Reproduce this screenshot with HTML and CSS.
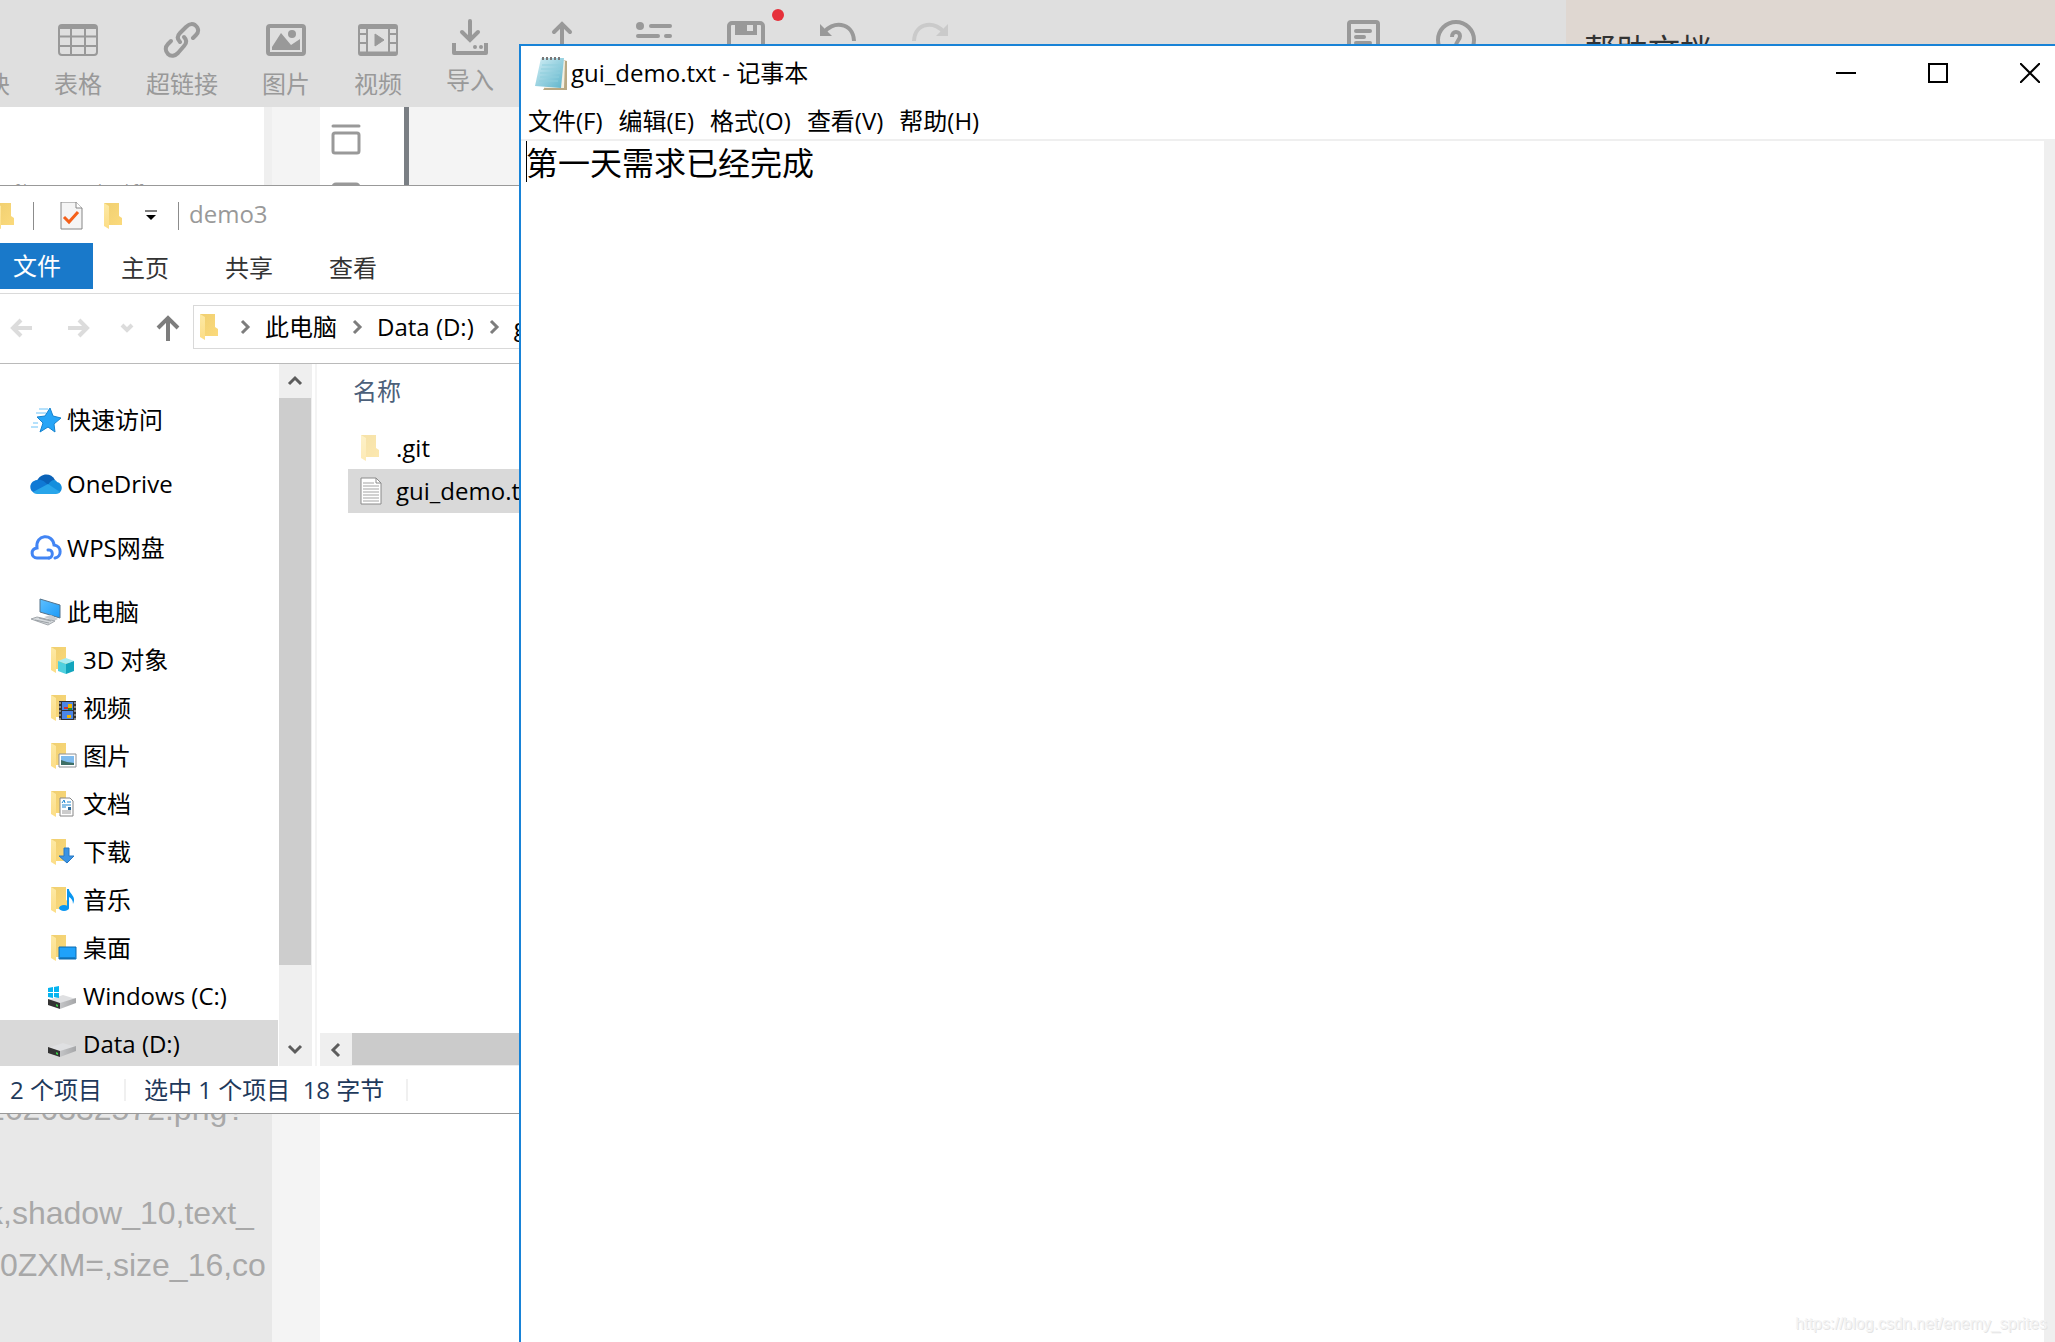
FILE: index.html
```html
<!DOCTYPE html>
<html lang="zh-CN">
<head>
    <meta charset="UTF-8">
    <meta name="viewport" content="width=device-width, initial-scale=1.0">
    <title>gui_demo.txt - 记事本</title>
    <link rel="stylesheet" href="styles.css">
</head>
<body>

<!-- shared icons -->
<svg class="sprite" aria-hidden="true">
    <defs>
        <linearGradient id="fold" x1="0" y1="0" x2="1" y2="1">
            <stop offset="0" stop-color="#f0cf70"/>
            <stop offset="1" stop-color="#fbda7c"/>
        </linearGradient>
        <linearGradient id="flap" x1="0" y1="0" x2="0" y2="1">
            <stop offset="0" stop-color="#fde9a4"/>
            <stop offset="1" stop-color="#fcdd86"/>
        </linearGradient>
        <linearGradient id="sky" x1="0" y1="0" x2="1" y2="1">
            <stop offset="0" stop-color="#5ec0ff"/>
            <stop offset="1" stop-color="#1b9af7"/>
        </linearGradient>
        <linearGradient id="metal" x1="0" y1="0" x2="1" y2="0">
            <stop offset="0" stop-color="#c4c5c7"/>
            <stop offset="1" stop-color="#a5a6a8"/>
        </linearGradient>
        <linearGradient id="pad" x1="0" y1="0" x2="1" y2="1">
            <stop offset="0" stop-color="#d3eff5"/>
            <stop offset="1" stop-color="#5db4cb"/>
        </linearGradient>
    </defs>
    <symbol id="folder" viewBox="0 0 28 28">
        <path d="M1 1h15v13l3 2v7H4z" fill="url(#fold)"/>
        <path d="M1 1l5 3v23l-5-3z" fill="url(#flap)"/>
    </symbol>
    <symbol id="chevron" viewBox="0 0 12 16">
        <path d="M3 2l6 6-6 6" fill="none" stroke="currentColor" stroke-width="3"/>
    </symbol>
    <symbol id="drive" viewBox="0 0 28 28">
        <path d="M0 18l15-5 13 4-16 5z" fill="#dfe0e2"/>
        <path d="M12 21l16-5v5l-16 6z" fill="url(#metal)"/>
        <path d="M0 17l12 4v6L0 23z" fill="#333"/>
        <path d="M8 22l2 1v2l-2-1z" fill="#3ad047"/>
    </symbol>
</svg>

<main class="desktop">

    <!-- editor behind the windows -->
    <section class="editor">
        <header class="toolbar">
            <button class="tool">
                <span class="tool-icon"></span>
                <span>块</span>
            </button>
            <button class="tool">
                <svg class="tool-icon" viewBox="0 0 40 40" fill="none" stroke="currentColor" stroke-width="2">
                    <rect x="1" y="5" width="38" height="30" rx="3"/>
                    <path d="M1 7h38" stroke-width="4"/>
                    <path d="M1 16.500h38M1 26h38M13 8v27M27 8v27"/>
                </svg>
                <span>表格</span>
            </button>
            <button class="tool">
                <svg class="tool-icon" viewBox="0 0 40 40" fill="none" stroke="currentColor" stroke-width="4" stroke-linecap="round">
                    <path d="M18 22c-3-3-3-6 0-9l6-6c3-3 6-4 9-2 4 3 4 7 1 10l-3 3"/>
                    <path d="M22 17c3 3 3 6 0 9l-6 7c-3 3-7 4-10 1s-3-7 0-10l3-3"/>
                </svg>
                <span>超链接</span>
            </button>
            <button class="tool">
                <svg class="tool-icon" viewBox="0 0 40 40">
                    <rect x="2" y="6" width="36" height="28" rx="2" fill="none" stroke="currentColor" stroke-width="4"/>
                    <path d="M6 30v-3l9-14 10 12 9-6v11z" fill="currentColor"/>
                    <circle cx="26" cy="14" r="4" fill="currentColor"/>
                </svg>
                <span>图片</span>
            </button>
            <button class="tool">
                <svg class="tool-icon" viewBox="0 0 40 40">
                    <rect x="1" y="5" width="38" height="30" rx="2" fill="none" stroke="currentColor" stroke-width="2"/>
                    <path d="M2 7h36M2 33.500h36" stroke="currentColor" stroke-width="4"/>
                    <path d="M9 6v28M31 6v28M2 14h7M2 23h7M31 14h7M31 23h7" stroke="currentColor" stroke-width="2"/>
                    <path d="M17 14l9 6-9 6z" fill="currentColor" stroke="currentColor"/>
                </svg>
                <span>视频</span>
            </button>
            <button class="tool raised">
                <svg class="tool-icon" viewBox="0 0 40 40" fill="none" stroke="currentColor" stroke-width="4" stroke-linecap="round">
                    <path d="M20 5v18M12 16l8 8 8-8"/>
                    <path d="M4 29v8h32v-8" stroke-linecap="square" stroke-linejoin="round"/>
                    <path d="M25 31h0M31 31h0"/>
                </svg>
                <span>导入</span>
            </button>
            <button class="tool raised" aria-label="导出">
                <svg class="tool-icon" viewBox="0 0 40 40" fill="none" stroke="currentColor" stroke-width="4" stroke-linecap="round">
                    <path d="M20 36V8M12 16l8-8 8 8"/>
                </svg>
            </button>
            <button class="tool raised" aria-label="大纲">
                <svg class="tool-icon" viewBox="0 0 40 40" fill="none" stroke="currentColor" stroke-width="4" stroke-linecap="round">
                    <circle cx="6" cy="10" r="4" fill="currentColor" stroke="none"/>
                    <path d="M17 10h19M4 20h20M32 20h4"/>
                </svg>
            </button>
            <button class="tool raised" aria-label="保存">
                <svg class="tool-icon" viewBox="0 0 40 40">
                    <rect x="3" y="7" width="34" height="34" rx="3" fill="none" stroke="currentColor" stroke-width="4"/>
                    <path d="M9 7h22v12H9z" fill="currentColor"/>
                    <path d="M21 9h6v6h-6z" fill="#dfdfdf"/>
                </svg>
                <span class="unsaved-dot"></span>
            </button>
            <button class="tool raised" aria-label="撤销">
                <svg class="tool-icon" viewBox="0 0 40 40">
                    <path d="M6 17c7-12 29-12 30 8" fill="none" stroke="currentColor" stroke-width="4"/>
                    <path d="M2 8v12h12z" fill="currentColor"/>
                </svg>
            </button>
            <button class="tool raised" aria-label="重做" disabled>
                <svg class="tool-icon" viewBox="0 0 40 40">
                    <path d="M34 17C27 5 5 5 4 25" fill="none" stroke="currentColor" stroke-width="4"/>
                    <path d="M38 8v12H26z" fill="currentColor"/>
                </svg>
            </button>
            <button class="tool raised push-right" aria-label="模版">
                <svg class="tool-icon" viewBox="0 0 40 40" fill="none" stroke="currentColor" stroke-width="4">
                    <rect x="5" y="6" width="29" height="34" rx="2"/>
                    <path d="M12 15h14M12 21h8M12 27h14" stroke-linecap="round"/>
                </svg>
            </button>
            <button class="tool raised" aria-label="帮助">
                <svg class="tool-icon" viewBox="0 0 40 40" fill="none" stroke="currentColor" stroke-width="4">
                    <circle cx="20" cy="24" r="18"/>
                    <path d="M16 21c0-7 8-6 8-1 0 4-4 5-4 10"/>
                </svg>
            </button>
        </header>
        <aside class="help-panel">帮助文档</aside>
        <div class="source">
            <p class="diff-hint">a file to view the diff</p>
            <div class="markdown">
                <p>2620332572.png?</p>
                <p></p>
                <p>k,shadow_10,text_</p>
                <p class="flush">0ZXM=,size_16,co</p>
            </div>
        </div>
        <div class="gutter"></div>
        <div class="side">
            <nav class="side-tools">
                <svg viewBox="0 0 30 88" fill="none" stroke="#999" stroke-width="3" stroke-linecap="round">
                    <path d="M2 2h26"/>
                    <rect x="2" y="9" width="26" height="20" rx="2"/>
                    <rect x="2" y="60" width="26" height="20" rx="3"/>
                </svg>
            </nav>
            <div class="preview"></div>
        </div>
    </section>

    <!-- file explorer -->
    <section class="explorer">
        <header class="quick-bar">
            <svg class="icon folder-icon cut" viewBox="0 0 28 28"><use href="#folder"/></svg>
            <span class="divider"></span>
            <svg class="icon" viewBox="0 0 28 28">
                <path d="M4 0h15l6 6v21H4z" fill="#f5f5f5" stroke="#868686"/>
                <path d="M19 0v6h6" fill="#fff" stroke="#868686"/>
                <path d="M7 15l5 5 9-10" fill="none" stroke="#f4601a" stroke-width="3"/>
            </svg>
            <svg class="icon folder-icon" viewBox="0 0 28 28"><use href="#folder"/></svg>
            <svg class="more" viewBox="0 0 12 12"><path d="M0 1h12" stroke="#000" stroke-width="1"/><path d="M1 5h10l-5 5z"/></svg>
            <span class="divider"></span>
            <h1>demo3</h1>
        </header>

        <nav class="tabs">
            <button class="tab file">文件</button>
            <button class="tab">主页</button>
            <button class="tab">共享</button>
            <button class="tab">查看</button>
        </nav>

        <div class="address-row">
            <div class="history">
                <svg viewBox="0 0 172 28" fill="none" stroke="#dcdcdc" stroke-width="4">
                    <path d="M2 14h20M11 6l-8 8 8 8M58 14h20M69 6l8 8-8 8"/>
                    <path d="M112 11l5 5 5-5"/>
                    <path d="M158 27V5M148 14l10-10 10 10" stroke="#7d7d7d"/>
                </svg>
            </div>
            <div class="address">
                <svg class="icon" viewBox="0 0 28 28"><use href="#folder"/></svg>
                <svg class="chevron"><use href="#chevron"/></svg>
                <a href="#pc">此电脑</a>
                <svg class="chevron"><use href="#chevron"/></svg>
                <a href="#data">Data (D:)</a>
                <svg class="chevron"><use href="#chevron"/></svg>
                <a href="#gui">gui</a>
            </div>
        </div>

        <div class="panes">
            <ul class="tree">
                <li class="group"><a href="#quick">
                    <svg class="root-icon" viewBox="0 0 32 32">
                        <path d="M20 4l3 8 8 2-7 6 1 8-7-5-8 5 3-9-6-6 8-1z" fill="#27a5f7" stroke="#1583cf"/>
                        <path d="M9 5h9M6 9h10M3 19h5M1 23h7" stroke="#6cc3f8"/>
                    </svg>快速访问</a></li>
                <li class="group"><a href="#onedrive">
                    <svg class="root-icon" viewBox="0 0 32 32">
                        <path d="M7 13c3-8 14-9 18-1l-8 7z" fill="#0a62b8"/>
                        <path d="M5 25c-7-2-6-12 2-13 5-1 8 2 11 5l-5 8z" fill="#0f79d5"/>
                        <path d="M18 17c3-6 8-6 9-3 6 1 6 9 2 11z" fill="#148fdd"/>
                        <path d="M3 24l15-8 12 8c-1 1-2 2-4 2H7c-2 0-3-1-4-2z" fill="#28a5ea"/>
                    </svg>OneDrive</a></li>
                <li class="group"><a href="#wps">
                    <svg class="root-icon" viewBox="0 0 32 32" fill="none" stroke="#4285f4" stroke-width="3" stroke-linecap="round">
                        <path d="M19 26H7c-6 0-7-9 0-10C5 2 23 1 24 13c8 1 8 12 1 13"/>
                        <path d="M18 18c5-1 6 7 1 8"/>
                    </svg>WPS网盘</a></li>
                <li class="group"><a href="#pc">
                    <svg class="root-icon" viewBox="0 0 32 32">
                        <path d="M10 3l20 6v13l-20-6z" fill="url(#sky)" stroke="#55738b"/>
                        <path d="M14 21l7-2 7 4-4 2z" fill="#c9cdd1"/>
                        <path d="M1 23l6-2 18 4-7 4z" fill="#d6dadd" stroke="#a3a8ad"/>
                        <path d="M5 24l14 3M9 22l12 3" stroke="#9aa0a5"/>
                    </svg>此电脑</a>
                    <ul>
                        <li><a href="#3d"><svg class="icon" viewBox="0 0 28 28"><use href="#folder"/>
                            <path d="M8 15l8-3 8 3-8 3z" fill="#a7ecf3"/><path d="M8 15l8 3v10l-8-3z" fill="#4fd0df"/><path d="M24 15l-8 3v10l8-3z" fill="#12a5bd"/></svg>3D 对象</a></li>
                        <li><a href="#video"><svg class="icon" viewBox="0 0 28 28"><use href="#folder"/>
                            <path d="M9 7h17v19H9z" fill="#333"/><path d="M12 8h11v8H12zM12 17h11v8H12z" fill="#4b86e8"/>
                            <path d="M10 8v18M25 8v18" stroke="#ddd" stroke-dasharray="2 2"/><path d="M18 10h4v4h-4zM17 21h4v3h-4z" fill="#f2b500"/><path d="M14 13h4v2h-4z" fill="#d2352b"/><path d="M18 14h4v2h-4z" fill="#278a38"/></svg>视频</a></li>
                        <li><a href="#pictures"><svg class="icon" viewBox="0 0 28 28"><use href="#folder"/>
                            <path d="M9 12h17v13H9z" fill="#fff" stroke="#8b8f94"/><path d="M11 14h13v9H11z" fill="#7fbbee"/><path d="M11 18l6 2 7 1v2H11z" fill="#3d6e66"/></svg>图片</a></li>
                        <li><a href="#documents"><svg class="icon" viewBox="0 0 28 28"><use href="#folder"/>
                            <path d="M10 8h10l3 3v15H10z" fill="#fff" stroke="#868686"/><path d="M17 12h4M12 15h9M12 17h4" stroke="#1c86d1"/><path d="M12 13l2-3 1 3" fill="none" stroke="#1c86d1"/><path d="M18 17h3v3h-3z" fill="#2d6c9c"/><path d="M12 21h9M12 23h9" stroke="#999"/></svg>文档</a></li>
                        <li><a href="#downloads"><svg class="icon" viewBox="0 0 28 28"><use href="#folder"/>
                            <path d="M14 10h5v8h5l-7 7-8-7h5z" fill="#3a93e3" stroke="#2779c4"/></svg>下载</a></li>
                        <li><a href="#music"><svg class="icon" viewBox="0 0 28 28"><use href="#folder"/>
                            <ellipse cx="14" cy="22" rx="5" ry="3" fill="#0a96f0"/><path d="M17 3h2c0 5 8 7 4 15 0-4-2-6-4-7v11h-2z" fill="#0a96f0"/></svg>音乐</a></li>
                        <li><a href="#desktop"><svg class="icon" viewBox="0 0 28 28"><use href="#folder"/>
                            <path d="M9 13h17v12H9z" fill="#1fa2fb" stroke="#0a6ab0"/><path d="M10 24h15" stroke="#0a5a96"/></svg>桌面</a></li>
                        <li class="drive"><a href="#c"><svg class="icon" viewBox="0 0 28 28"><use href="#drive"/>
                            <path d="M0 6l5-1v5H0zM6 5l5-1v6H6zM0 11h5v5l-5-1zM6 11h5v5l-5-1z" fill="#06b4f0"/></svg>Windows (C:)</a></li>
                        <li class="drive selected"><a href="#data"><svg class="icon" viewBox="0 0 28 28"><use href="#drive"/></svg>Data (D:)</a></li>
                    </ul>
                </li>
            </ul>

            <div class="scroll-y">
                <button aria-label="向上"><svg class="chevron up"><use href="#chevron"/></svg></button>
                <div class="thumb"></div>
                <button class="end" aria-label="向下"><svg class="chevron down"><use href="#chevron"/></svg></button>
            </div>

            <div class="files">
                <table>
                    <thead><tr><th>名称</th></tr></thead>
                    <tbody>
                        <tr><td><svg class="icon hidden-folder" viewBox="0 0 28 28"><use href="#folder"/></svg>.git</td></tr>
                        <tr class="selected"><td><svg class="icon" viewBox="0 0 28 28">
                            <path d="M1 1h15l5 5v21H1z" fill="#fff" stroke="#8a8a8a"/>
                            <path d="M16 1v5h5" fill="none" stroke="#8a8a8a"/>
                            <path d="M3 6h11M3 9h16M3 12h16M3 15h16M3 18h16M3 21h16M3 24h16" stroke="#a3a3a3"/>
                        </svg>gui_demo.txt</td></tr>
                    </tbody>
                </table>
                <div class="scroll-x">
                    <button aria-label="向左"><svg class="chevron left"><use href="#chevron"/></svg></button>
                    <div class="thumb"></div>
                </div>
            </div>
        </div>

        <footer class="status">
            <span>2 个项目</span>
            <span>选中 1 个项目&nbsp; 18 字节</span>
        </footer>
    </section>

    <!-- notepad -->
    <section class="notepad">
        <header class="title-bar">
            <svg class="pad-icon" viewBox="0 0 32 36">
                <path d="M28 5l4 1v29l-24 0z" fill="#b8a883"/>
                <path d="M28 5l2 1-1 27H9z" fill="#f4efe1"/>
                <path d="M6 3h23l-3 30-26-2z" fill="url(#pad)"/>
                <path d="M7 10h19M6 14h19M5 18h20M5 22h19M4 26h19" stroke="#90cfdd"/>
                <path d="M8 5V2M12 5V2M16 5V2M20 5V2M24 5V2" stroke="#777" stroke-width="2"/>
            </svg>
            <h2>gui_demo.txt - 记事本</h2>
            <div class="window-buttons">
                <button aria-label="最小化"><svg viewBox="0 0 20 20"><path d="M0 10h20"/></svg></button>
                <button aria-label="最大化"><svg viewBox="0 0 20 20"><path d="M1 1h18v18H1z"/></svg></button>
                <button aria-label="关闭"><svg viewBox="0 0 20 20"><path d="M0 0l20 20M20 0L0 20"/></svg></button>
            </div>
        </header>
        <nav class="menu">
            <button>文件(F)</button>
            <button>编辑(E)</button>
            <button>格式(O)</button>
            <button>查看(V)</button>
            <button>帮助(H)</button>
        </nav>
        <div class="document">
            <textarea aria-label="文本内容" spellcheck="false">第一天需求已经完成</textarea>
            <span class="caret"></span>
            <div class="document-scroll"></div>
        </div>
    </section>

    <span class="watermark">https://blog.csdn.net/enemy_sprites</span>
</main>

</body>
</html>
```

FILE: styles.css
```css
* {
    box-sizing: border-box;
    margin: 0;
    padding: 0;
}

body {
    font-family: "Open Sans", "Noto Sans CJK SC", sans-serif;
    font-size: 24px;
    line-height: 32px;
    color: #000;
}

button {
    font: inherit;
    color: inherit;
    background: none;
    border: none;
}

a {
    color: inherit;
    text-decoration: none;
}

ul {
    list-style: none;
}

h1, h2 {
    font-size: 24px;
    font-weight: normal;
}

svg {
    display: block;
    flex: none;
}

.sprite {
    position: absolute;
    width: 0;
    height: 0;
}

.desktop {
    position: relative;
    height: 100vh;
    overflow: hidden;
    background-color: #fff;
}

/* editor */
.editor {
    display: grid;
    grid-template-columns: 272px 48px 1fr 489px;
    grid-template-rows: 107px 1fr;
    height: 100%;
    background-color: #f4f4f4;
}

.toolbar {
    grid-column: 1 / 4;
    display: flex;
    gap: 44px;
    padding: 20px 86px 0 0;
    background-color: #dfdfdf;
    color: #999;
}

.tool {
    position: relative;
    display: flex;
    flex-direction: column;
    align-items: center;
    gap: 8px;
    min-width: 48px;
}

.tool:first-child {
    min-width: 24px;
    margin-left: -14px;
}

.tool:disabled {
    color: #cacaca;
}

.tool-icon {
    width: 40px;
    height: 40px;
}

.tool:first-child .tool-icon {
    width: 24px;
}

.raised {
    margin-top: -4px;
}

.push-right {
    margin-left: auto;
}

.unsaved-dot {
    position: absolute;
    top: -7px;
    right: -14px;
    width: 12px;
    height: 12px;
    border-radius: 50%;
    background-color: #e6303a;
}

.help-panel {
    padding: 28px 18px;
    font-size: 32px;
    line-height: 44px;
    color: #333;
    background-color: #dfd7d1;
}

.source {
    display: flex;
    flex-direction: column;
    justify-content: space-between;
    overflow: hidden;
    background-color: #e8e8e8;
}

.diff-hint {
    height: 400px;
    padding: 66px 2px;
    font-size: 15px;
    color: #999;
    background-color: #fff;
    border-right: 8px solid #efefef;
}

.markdown {
    height: 259px;
    font-family: "Liberation Sans", Arial, sans-serif;
    font-size: 32px;
    line-height: 52px;
    color: #a8a8a8;
    white-space: nowrap;
}

.markdown p {
    height: 52px;
    margin-left: -13px;
}

.markdown .flush {
    margin-left: 0;
}

.side {
    grid-column: 3 / 5;
    display: flex;
    align-items: flex-start;
    background-color: #fff;
}

.side-tools {
    width: 84px;
    padding: 17px 11px;
}

.side-tools svg {
    width: 30px;
    height: 88px;
}

.preview {
    flex: 1;
    height: 400px;
    background-color: #f4f4f4;
    border-left: 5px solid #7a7f84;
}

/* explorer */
.explorer {
    position: absolute;
    top: 185px;
    left: 0;
    width: 760px;
    height: 929px;
    display: flex;
    flex-direction: column;
    overflow: hidden;
    background-color: #fff;
    border-top: 1px solid #999;
    border-bottom: 1px solid #999;
}

.icon {
    width: 28px;
    height: 28px;
}

.chevron {
    width: 12px;
    height: 16px;
    color: #7d7d7d;
}

.quick-bar {
    display: flex;
    align-items: center;
    height: 57px;
    padding-top: 2px;
}

.quick-bar h1 {
    padding: 0 0 4px 10px;
    color: #999;
}

.cut {
    margin-left: -5px;
}

.divider {
    width: 1px;
    height: 28px;
    margin-left: 10px;
    background-color: #8c8c8c;
}

.quick-bar .icon + .icon {
    margin-left: 18px;
}

.divider + .icon {
    margin-left: 23px;
}

.more {
    width: 12px;
    height: 12px;
    margin: 0 11px 0 14px;
}

.tabs {
    display: flex;
    height: 51px;
    padding-bottom: 4px;
    border-bottom: 1px solid #dadada;
}

.tab {
    padding: 4px 28px 0;
    color: #333;
}

.tab.file {
    padding: 0 32px 0 13px;
    color: #fff;
    background-color: #1979ca;
}

.address-row {
    display: flex;
    height: 70px;
    padding: 11px 0 14px;
    border-bottom: 1px solid #bababa;
}

.history {
    width: 193px;
    padding: 9px 10px 0;
}

.history svg {
    width: 172px;
    height: 28px;
}

.address {
    flex: 1;
    display: flex;
    align-items: center;
    gap: 14px;
    padding-left: 5px;
    border: 1px solid #d9d9d9;
    white-space: nowrap;
}

.address .icon {
    margin-right: -2px;
}

.panes {
    flex: 1;
    display: flex;
    min-height: 0;
}

.tree {
    width: 279px;
    padding: 32px 1px 0 0;
    overflow: hidden;
}

.group {
    margin-bottom: 16px;
}

.tree a {
    display: flex;
    align-items: center;
    gap: 5px;
    height: 48px;
    padding-left: 30px;
    white-space: nowrap;
}

.tree ul a {
    padding-left: 50px;
}

.tree .drive a {
    gap: 7px;
    padding-left: 48px;
}

.root-icon {
    width: 32px;
    height: 32px;
}

.selected {
    background-color: #d9d9d9;
}

.scroll-y {
    display: flex;
    flex-direction: column;
    width: 33px;
    background-color: #efefef;
}

.scroll-y button, .scroll-x button {
    display: flex;
    align-items: center;
    justify-content: center;
    width: 32px;
    height: 34px;
}

.scroll-y .end {
    margin-top: auto;
}

.scroll-y .chevron, .scroll-x .chevron {
    color: #5c5c5c;
}

.scroll-y .thumb {
    width: 32px;
    height: 567px;
    background-color: #cdcdcd;
}

.up {
    transform: rotate(-90deg);
}

.down {
    transform: rotate(90deg);
}

.left {
    transform: rotate(180deg);
}

.files {
    flex: 1;
    display: flex;
    flex-direction: column;
    justify-content: space-between;
    margin-left: 3px;
    padding-left: 3px;
    border-left: 2px solid #f4f4f4;
}

.files table {
    margin-left: 28px;
    border-collapse: collapse;
}

.files th {
    height: 63px;
    padding: 0 5px 9px;
    font-weight: normal;
    text-align: left;
    color: #4c607a;
}

.files td {
    display: flex;
    align-items: center;
    gap: 8px;
    height: 42px;
    padding-left: 12px;
}

.files .selected td {
    height: 44px;
}

.hidden-folder {
    opacity: 0.6;
}

.scroll-x {
    display: flex;
    height: 33px;
    background-color: #efefef;
}

.scroll-x .thumb {
    flex: 1;
    height: 32px;
    background-color: #cbcbcb;
}

.status {
    display: flex;
    align-items: center;
    height: 47px;
    color: #1e395b;
}

.status span {
    padding: 0 22px 0 18px;
    line-height: 22px;
    border-right: 2px solid #f0f0f0;
}

.status span:first-child {
    padding-left: 10px;
}

/* notepad */
.notepad {
    position: absolute;
    top: 44px;
    left: 519px;
    right: -21px;
    bottom: 0;
    display: flex;
    flex-direction: column;
    background-color: #fff;
    border-top: 2px solid #1883d7;
    border-left: 2px solid #1883d7;
}

.title-bar {
    display: flex;
    align-items: center;
    height: 54px;
    padding-left: 14px;
}

.pad-icon {
    width: 32px;
    height: 36px;
    margin-right: 4px;
}

.window-buttons {
    display: flex;
    height: 100%;
    margin-left: auto;
}

.window-buttons button {
    display: flex;
    align-items: center;
    justify-content: center;
    width: 92px;
}

.window-buttons svg {
    width: 20px;
    height: 20px;
    fill: none;
    stroke: #000;
    stroke-width: 2px;
}

.menu {
    display: flex;
    gap: 16px;
    height: 41px;
    padding: 2px 7px 0;
    border-bottom: 2px solid #efefef;
}

.document {
    position: relative;
    flex: 1;
    display: flex;
}

.document textarea {
    flex: 1;
    padding: 1px 5px;
    font: inherit;
    font-size: 32px;
    line-height: 42px;
    border: none;
    outline: none;
    resize: none;
}

.caret {
    position: absolute;
    top: 0;
    left: 5px;
    width: 1px;
    height: 41px;
    background-color: #000;
}

.document-scroll {
    width: 32px;
    background-color: #efefef;
}

.watermark {
    position: absolute;
    right: 8px;
    bottom: 2px;
    font-family: "Liberation Sans", Arial, sans-serif;
    font-size: 16px;
    color: #f4f4f4;
    text-shadow: 1px 1px 0 #e4e4e4;
}
```
